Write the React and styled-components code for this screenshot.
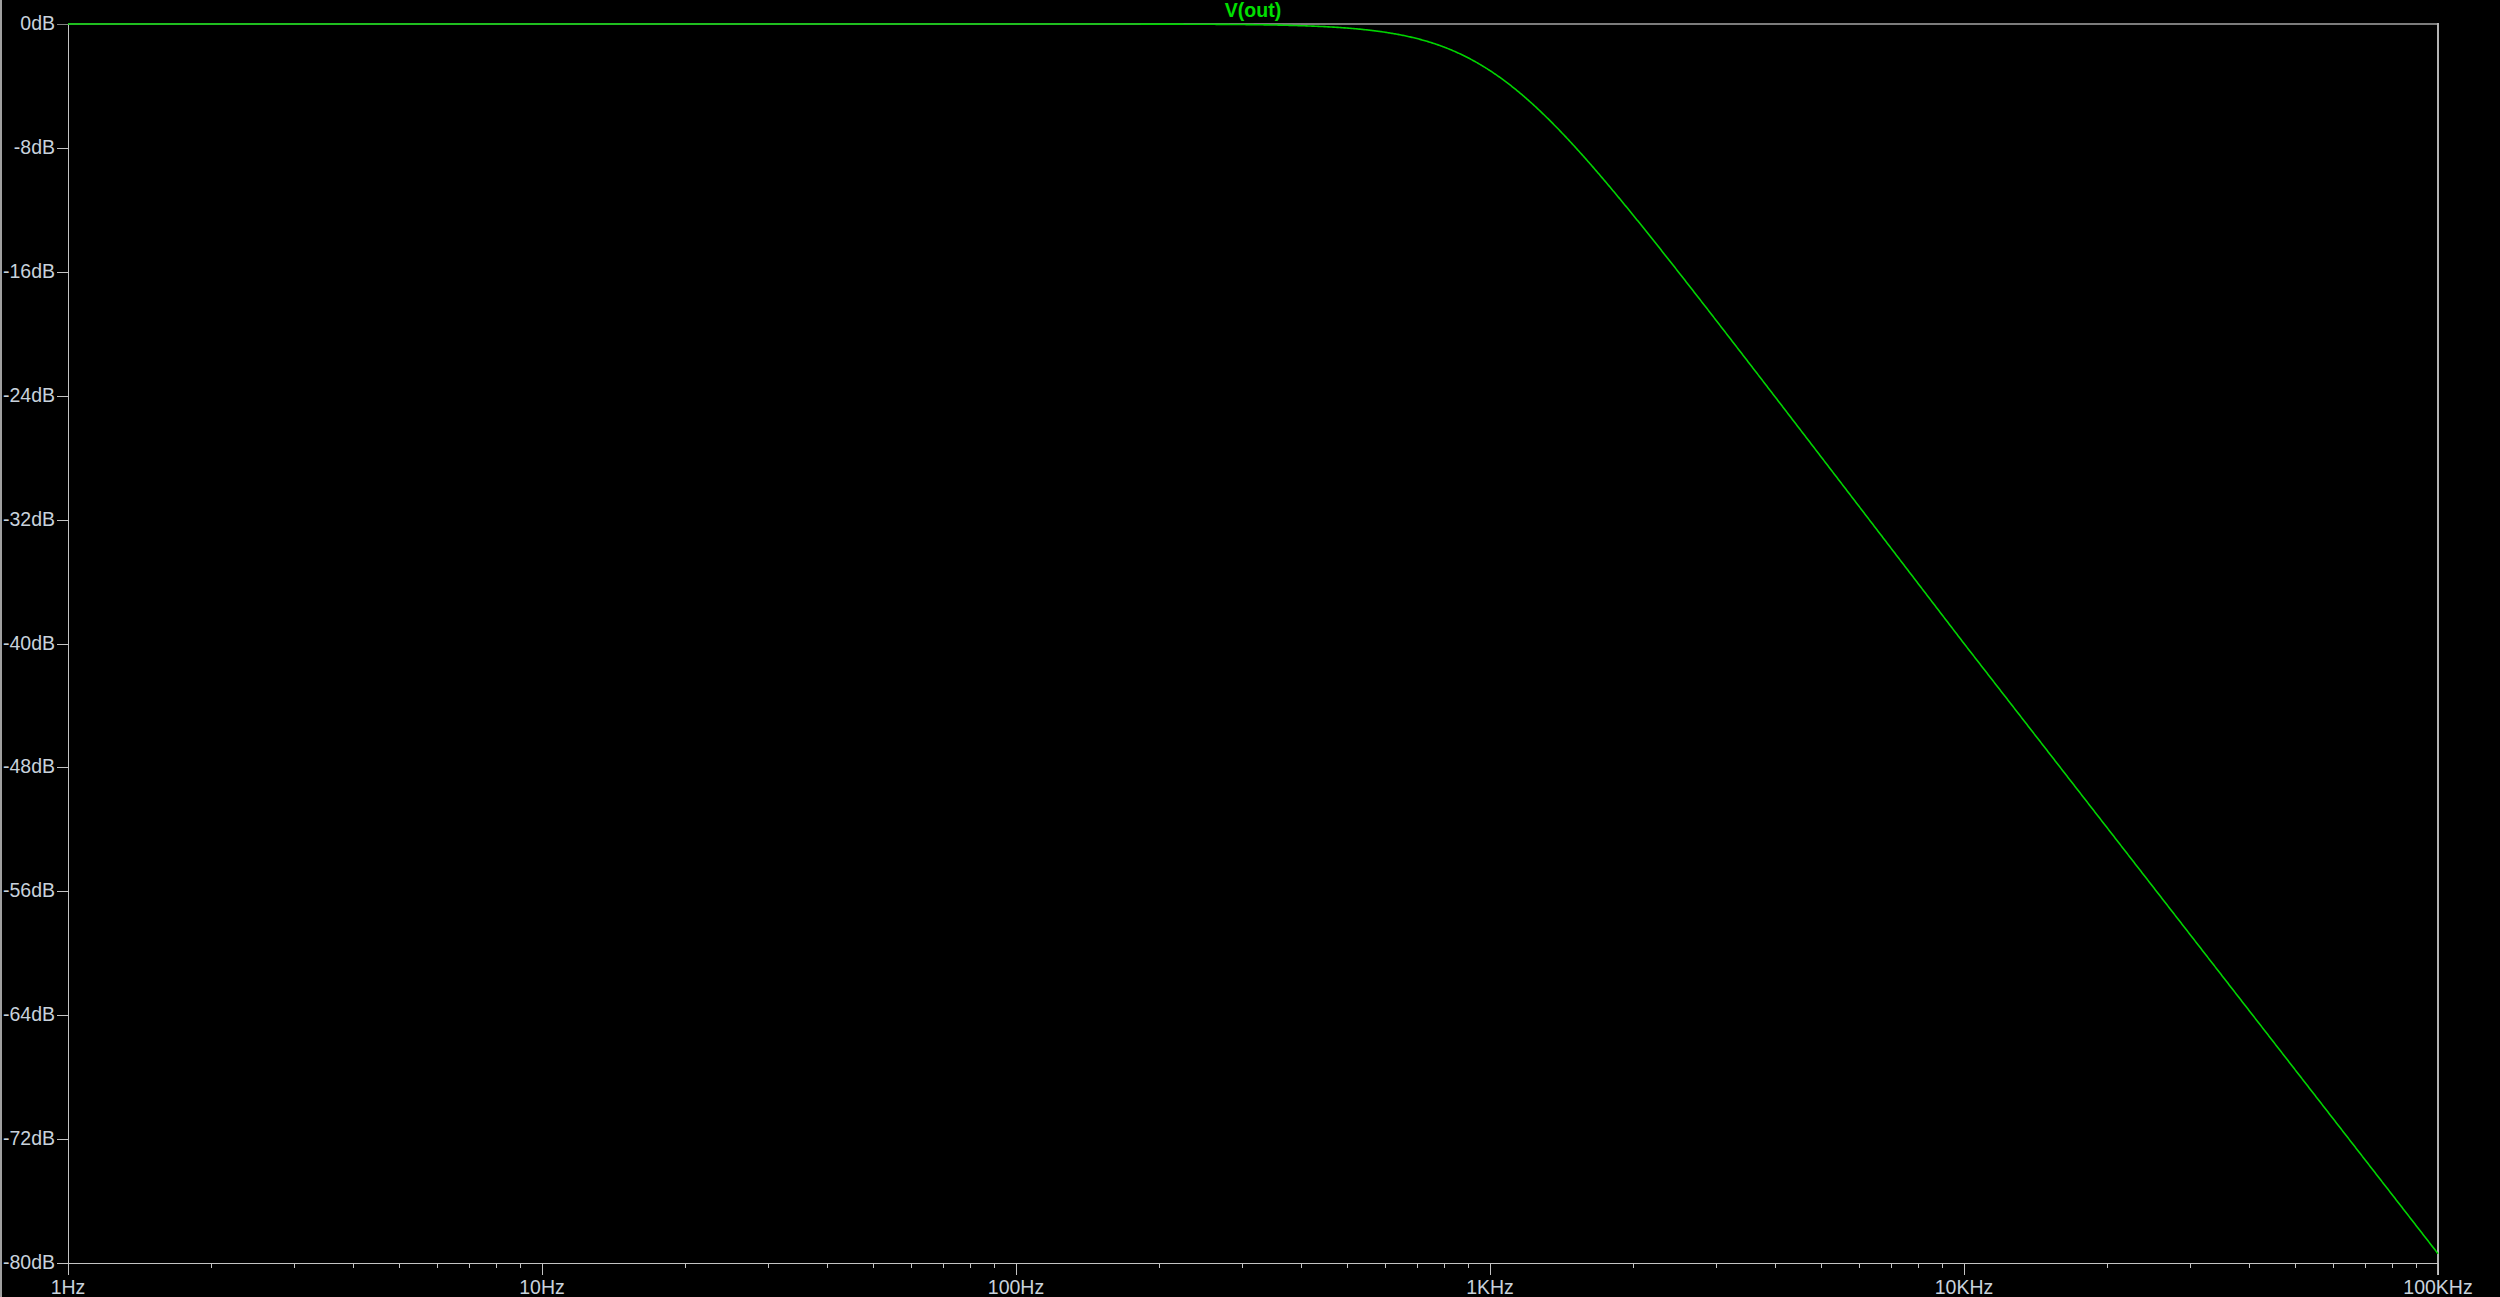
import React from "react";
import styled, { createGlobalStyle } from "styled-components";

const GlobalStyle = createGlobalStyle`
  html, body {
    margin: 0;
    padding: 0;
    background: #000;
    overflow: hidden;
  }
`;

// plot geometry, in page pixels
const LEFT = 68;
const RIGHT = 2438;
const TOP = 24;
const BOTTOM = 1263;
const DECADE = (RIGHT - LEFT) / 5;
const PX_PER_DB = (BOTTOM - TOP) / 80;

const decades = ["1Hz", "10Hz", "100Hz", "1KHz", "10KHz", "100KHz"];
const dbSteps = [0, -8, -16, -24, -32, -40, -48, -56, -64, -72, -80];

const Screen = styled.div`
  display: flex;
  width: 100vw;
  height: 100vh;
  box-sizing: border-box;
  border-left: 2px solid #a0a0a0;
  background: #000;
`;

const Plot = styled.svg`
  flex: 1;
  display: block;
  height: 100%;
`;

const Axis = styled.line`
  stroke: ${props => props.tone || "#c4c4c4"};
  stroke-width: ${props => props.weight || 1};
  shape-rendering: crispEdges;
`;

const TickLabel = styled.text`
  fill: #c8d2dc;
  font-family: "Liberation Sans", Arial, sans-serif;
  font-size: 19.5px;
  text-anchor: ${props => props.anchor || "middle"};
`;

const TraceName = styled.text`
  fill: #00e000;
  font-family: "Liberation Sans", Arial, sans-serif;
  font-weight: bold;
  font-size: 19.5px;
  text-anchor: middle;
`;

const Trace = styled.path`
  fill: none;
  stroke: #00d400;
  stroke-width: 1.6;
  stroke-linejoin: round;
`;

const gainDb = f => {
  const r = f / 1000;
  let db = -10 * Math.log10(1 + Math.pow(r, 4));
  if (f > 10000) db += 0.6 * Math.log10(f / 10000);
  return db;
};

const tracePath = () => {
  let d = "";
  for (let x = LEFT; x <= RIGHT; x += 1) {
    const f = Math.pow(10, (x - LEFT) / DECADE);
    const y = Math.max(TOP, TOP - gainDb(f) * PX_PER_DB);
    d += `${x === LEFT ? "M" : "L"}${x} ${y.toFixed(2)} `;
  }
  return d;
};

const App = () => {
  const minorTicks = [];
  for (let dec = 0; dec < 5; dec++) {
    for (let k = 2; k <= 9; k++) {
      const x = Math.round(LEFT + DECADE * (dec + Math.log10(k))) + 0.5;
      minorTicks.push(
        <Axis key={`${dec}-${k}`} x1={x} x2={x} y1={BOTTOM} y2={BOTTOM + 5} />
      );
    }
  }

  return (
    <>
      <GlobalStyle />
      <Screen>
        <Plot viewBox="2 0 2498 1297" preserveAspectRatio="none">
          {/* frame */}
          <Axis x1={LEFT} x2={RIGHT + 1} y1={TOP} y2={TOP} tone="#7c7c7c" weight={2} />
          <Axis x1={RIGHT} x2={RIGHT} y1={TOP - 1} y2={BOTTOM + 12} tone="#b4b4b4" weight={2} />
          <Axis x1={LEFT + 0.5} x2={LEFT + 0.5} y1={TOP} y2={BOTTOM + 12} />
          <Axis x1={LEFT} x2={RIGHT} y1={BOTTOM + 0.5} y2={BOTTOM + 0.5} />

          {/* y axis */}
          {dbSteps.map((db, i) => {
            const y = Math.round(TOP + i * (BOTTOM - TOP) / 10);
            return (
              <g key={db}>
                <Axis
                  x1={57}
                  x2={LEFT}
                  y1={y + 0.5}
                  y2={y + 0.5}
                  tone={i === 0 ? "#808080" : undefined}
                />
                <TickLabel x={55} y={y + 6} anchor="end">
                  {db}dB
                </TickLabel>
              </g>
            );
          })}

          {/* x axis */}
          {minorTicks}
          {decades.map((name, i) => {
            const x = Math.round(LEFT + i * DECADE);
            return (
              <g key={name}>
                <Axis x1={x + 0.5} x2={x + 0.5} y1={BOTTOM} y2={BOTTOM + 12} />
                <TickLabel x={x} y={1294}>
                  {name}
                </TickLabel>
              </g>
            );
          })}

          <Trace d={tracePath()} />
          <TraceName x={1253} y={17}>
            V(out)
          </TraceName>
        </Plot>
      </Screen>
    </>
  );
};

export default App;
